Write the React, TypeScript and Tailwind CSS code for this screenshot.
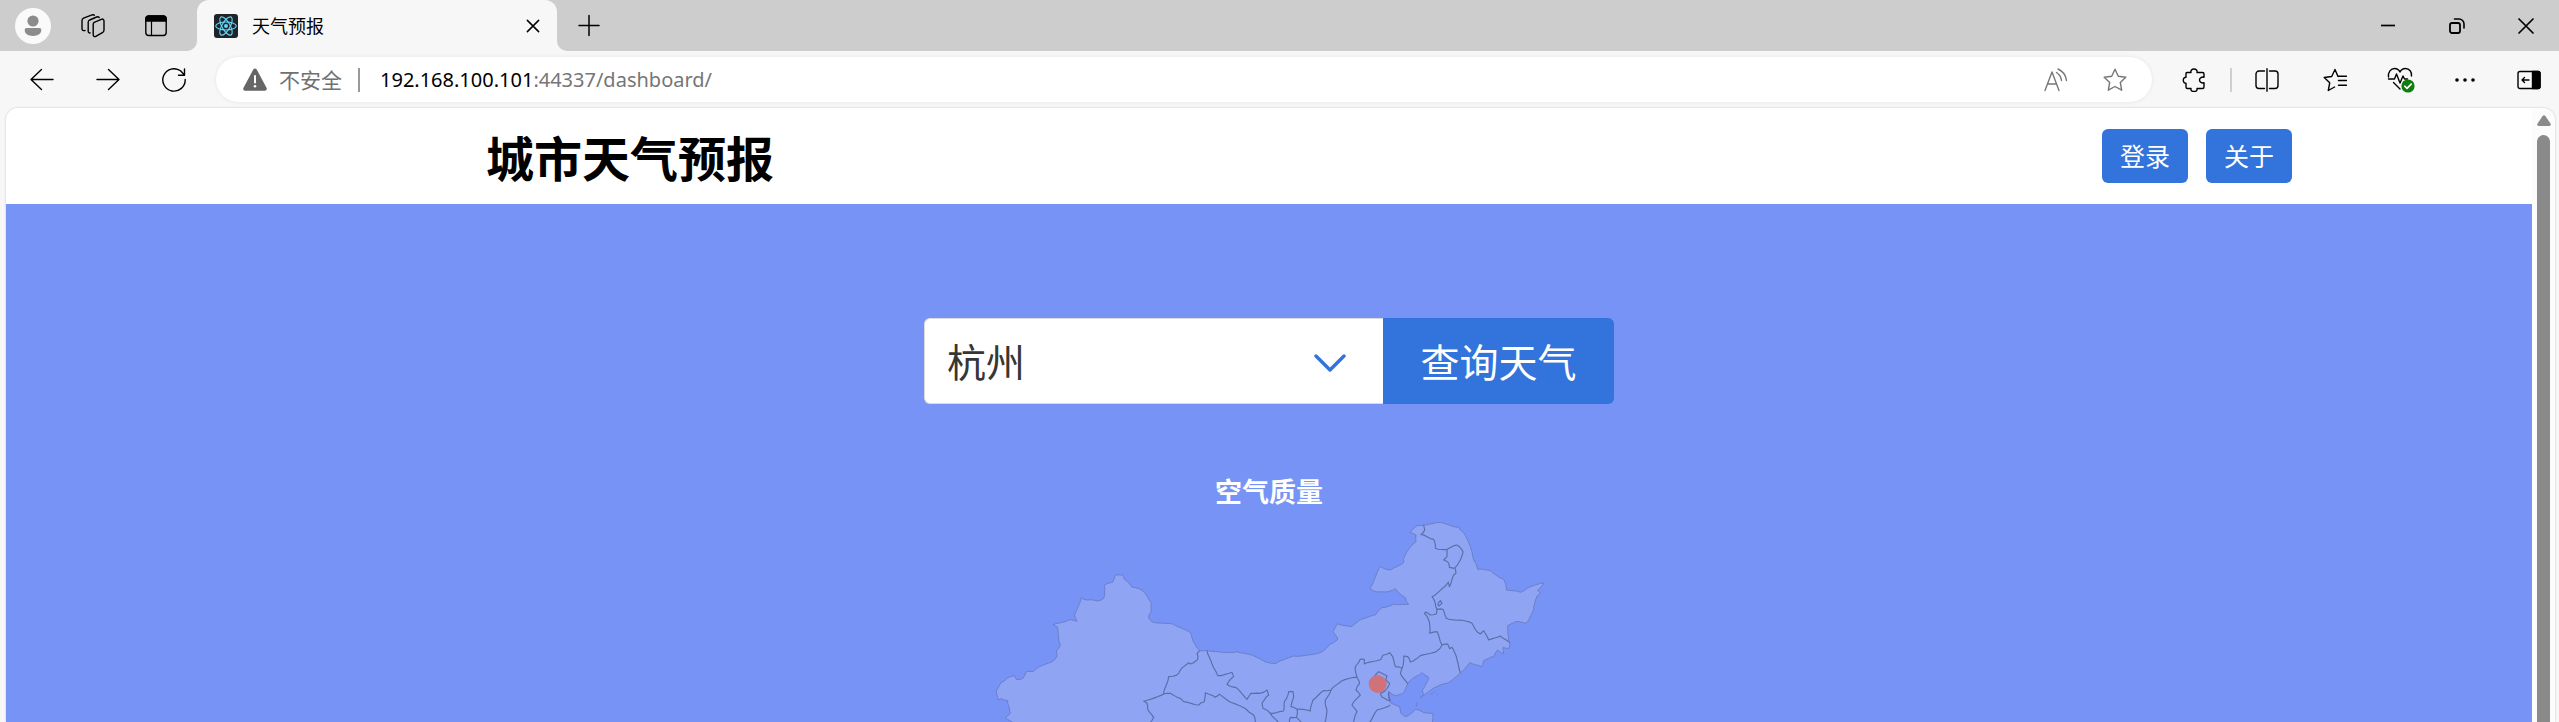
import type { ReactNode } from "react";

type Point = [number, number];

function Icon({ children, className = "size-6" }: { children: ReactNode; className?: string }) {
  return (
    <svg
      viewBox="0 0 24 24"
      fill="none"
      stroke="currentColor"
      strokeWidth="1.4"
      strokeLinecap="round"
      strokeLinejoin="round"
      className={className}
      aria-hidden="true"
    >
      {children}
    </svg>
  );
}

function IconButton({ label, className, children }: { label: string; className: string; children: ReactNode }) {
  return (
    <button type="button" aria-label={label} className={`flex h-11 shrink-0 items-center justify-center ${className}`}>
      {children}
    </button>
  );
}

function ReactLogo() {
  return (
    <svg viewBox="0 0 24 24" className="size-6 shrink-0" aria-hidden="true">
      <rect width="24" height="24" rx="3" fill="#20232a" />
      <g fill="none" stroke="#61dafb" strokeWidth="1.1">
        <ellipse cx="12" cy="12" rx="10.3" ry="4" />
        <ellipse cx="12" cy="12" rx="10.3" ry="4" transform="rotate(60 12 12)" />
        <ellipse cx="12" cy="12" rx="10.3" ry="4" transform="rotate(120 12 12)" />
      </g>
      <circle cx="12" cy="12" r="2" fill="#61dafb" />
    </svg>
  );
}

function TabStrip() {
  return (
    <div className="flex h-[51px] bg-[#f7f7f7]">
      <div className="flex w-[197px] shrink-0 items-center rounded-br-[10px] bg-[#cdcdcd] pl-[15px]">
        <button type="button" aria-label="个人资料" className="size-9 overflow-hidden rounded-full bg-[#fafafa]">
          <svg viewBox="0 0 36 36" fill="#8c8c8c" aria-hidden="true">
            <circle cx="18" cy="13" r="5.6" />
            <path d="M11.5 20h13a1.8 1.8 0 0 1 1.8 1.8c0 4-3.2 6.2-8.3 6.2s-8.3-2.2-8.3-6.2A1.8 1.8 0 0 1 11.5 20z" />
          </svg>
        </button>
        <IconButton label="工作区" className="ml-5 w-11">
          <Icon>
            <path d="M13.2 8.4 20.3 5.300c1.500-.6 2.700.1 2.700 1.600v9.200c0 1.200-.5 2-1.600 2.500l-6.600 3.700c-1.300.7-2.600 0-2.600-1.600V10.500c0-1 .3-1.700 1-2.100z" />
            <path d="M9.200 18.900c-1.300.2-2-.5-2-1.700V8.300c0-1.100.5-1.900 1.500-2.300l7-3c1-.4 1.900-.2 2.500.5" />
            <path d="M4 16.500c-1.700.3-3-.3-3-1.700V6.500c0-1.100.5-1.900 1.500-2.300l8.600-3.300c1-.4 1.700-.2 2.200.4" />
          </Icon>
        </IconButton>
        <IconButton label="标签页操作" className="ml-[19px] w-11">
          <Icon>
            <rect x="1.800" y="2" width="20.400" height="19.500" rx="3" />
            <path d="M2 7V5a3 3 0 0 1 3-3h14a3 3 0 0 1 3 3v2z" fill="currentColor" />
            <path d="M7.500 7v14.500" strokeWidth="1.200" />
          </Icon>
        </IconButton>
      </div>
      <div className="w-[360px] shrink-0 bg-[#cdcdcd]">
        <div className="flex h-full items-center rounded-t-[12px] bg-[#f7f7f7] pr-2 pl-[17px]">
          <ReactLogo />
          <span className="ml-[14px] pb-0.5 text-[18px] leading-6 text-black">天气预报</span>
          <IconButton label="关闭标签页" className="ml-auto w-8">
            <Icon className="size-[18px]">
              <path d="M4.500 4.500l15 15M19.500 4.500l-15 15" strokeWidth="2" />
            </Icon>
          </IconButton>
        </div>
      </div>
      <div className="flex grow items-center rounded-bl-[10px] bg-[#cdcdcd] pr-[11px] pl-[10px]">
        <IconButton label="新建标签页" className="w-11">
          <Icon>
            <path d="M2 11.500h20M12 1.500v20" strokeWidth="1.500" />
          </Icon>
        </IconButton>
        <div className="ml-auto flex items-center gap-[25px]">
          <IconButton label="最小化" className="w-11">
            <Icon>
              <path d="M5 11.500h14" strokeWidth="1.700" strokeLinecap="butt" />
            </Icon>
          </IconButton>
          <IconButton label="还原" className="w-11">
            <Icon>
              <rect x="5" y="9" width="10" height="10" rx="2" strokeWidth="1.800" />
              <path d="M9.500 5h4.500a5 5 0 0 1 5 5v4" strokeWidth="1.600" />
            </Icon>
          </IconButton>
          <IconButton label="关闭窗口" className="w-11">
            <Icon>
              <path d="M5 5l14 14M19 5L5 19" strokeWidth="1.700" />
            </Icon>
          </IconButton>
        </div>
      </div>
    </div>
  );
}

function Toolbar() {
  return (
    <div className="flex h-[57px] items-center bg-[#f7f7f7] pr-2 pl-5">
      <IconButton label="后退" className="w-11">
        <Icon>
          <path d="M23 11.500H1M11.500 1.500 1 11.500l10.500 10" />
        </Icon>
      </IconButton>
      <IconButton label="前进" className="ml-[22px] w-11">
        <Icon>
          <path d="M1 11.500h22M12.500 1.500 23 11.500l-10.500 10" />
        </Icon>
      </IconButton>
      <IconButton label="刷新" className="ml-[22px] w-11">
        <Icon>
          <path d="M23.200 11.500A11.200 11.200 0 1 1 18.500 2.800l4 4.200M22.500 1v6.200h-6" />
        </Icon>
      </IconButton>

      <div className="ml-5 flex h-[45px] grow items-center rounded-full bg-white pr-[15px] pl-[27px] shadow-[0_0_4px_rgba(0,0,0,0.08)]">
        <svg viewBox="0 0 24 24" className="size-6 shrink-0" aria-hidden="true">
          <path d="M10.300 1.500c.8-1.300 2.600-1.300 3.400 0l9.800 18.200c.8 1.400-.1 3.100-1.700 3.100H2.200c-1.600 0-2.500-1.700-1.700-3.100z" fill="#666666" />
          <path d="M12 8v6.500" stroke="#ffffff" strokeWidth="2" strokeLinecap="round" />
          <circle cx="12" cy="18.300" r="1.300" fill="#ffffff" />
        </svg>
        <span className="ml-3 pb-0.5 text-[21px] leading-7 text-[#707070]">不安全</span>
        <span className="ml-4 h-6 w-0.5 bg-[#999999]" />
        <div className="ml-5 grow font-['Noto_Sans','Noto_Sans_CJK_SC',sans-serif] text-[20px] leading-7">
          <span className="text-black">192.168.100.101</span>
          <span className="text-[#767676]">:44337/dashboard/</span>
        </div>
        <div className="flex items-center gap-[15px] text-[#767676]">
          <IconButton label="大声朗读此页内容" className="w-11">
            <Icon>
              <path d="M1 22.500 8 4l7 18.500M3.700 16h8.700" />
              <path d="M12.500 4.500a11 11 0 0 1 5 8M14 1a14.500 14.500 0 0 1 8.500 11.500" />
            </Icon>
          </IconButton>
          <IconButton label="收藏此页" className="w-11">
            <Icon>
              <path d="M12 1.200l3.300 7 7.500 1-5.500 5.300 1.400 7.700L12 18.500l-6.700 3.700 1.400-7.700L1.200 9.200l7.500-1z" />
            </Icon>
          </IconButton>
        </div>
      </div>

      <div className="ml-5 flex items-center text-black">
        <IconButton label="扩展" className="w-11">
          <Icon>
            <path d="M5 4.500h4c-.5-2 .8-3.500 3-3.500s3.500 1.500 3 3.500h5.500A1.500 1.500 0 0 1 22 6v3.200c-2.300-.5-4.500.5-4.500 2.800s2.200 3.300 4.500 2.800V19a1.500 1.500 0 0 1-1.500 1.500H15c.5 1.700-.8 3-3 3s-3.500-1.300-3-3H5.500A1.500 1.500 0 0 1 4 19v-3.700c-1.600.1-2.700-1.300-2.700-3.100S2.400 9 4 9.200V5.500a1 1 0 0 1 1-1z" />
          </Icon>
        </IconButton>
        <span className="mr-[13px] ml-[14px] h-6 w-0.5 bg-[#cfcfcf]" />
        <IconButton label="拆分屏幕" className="w-11">
          <Icon>
            <path d="M9.500 3H4a3 3 0 0 0-3 3v11.500a3 3 0 0 0 3 3h5.500M14.500 3H20a3 3 0 0 1 3 3v11.500a3 3 0 0 1-3 3h-5.500M12 .7v22.500" />
          </Icon>
        </IconButton>
        <IconButton label="收藏夹" className="ml-6 w-11">
          <Icon>
            <path d="M15 8.500 12 1.500l-3.300 7-7.500 1 5.500 5.300-1.400 7.700 6.300-3.500M15.500 8.200h8M15.500 12.500h8M15.500 17.300h8" />
          </Icon>
        </IconButton>
        <IconButton label="浏览器概要" className="ml-[22px] w-11">
          <svg viewBox="0 0 28 28" fill="none" stroke="currentColor" strokeWidth="1.400" strokeLinecap="round" strokeLinejoin="round" className="size-7" aria-hidden="true">
            <path d="M1.500 11C.8 6 4 2.500 7.500 2.500c2.500 0 4.500 1.500 5.500 3.500 1-2 3-3.500 5.500-3.500 4 0 6.500 3.500 6 7.500" />
            <path d="M1.500 13h6l2-5 3.500 9 3-7 1.500 3h3M6.500 16.500l6.500 6.500" />
            <circle cx="21" cy="20" r="6.600" fill="#107c10" stroke="none" />
            <path d="m17.800 20.200 2.200 2.200 4.200-4.300" stroke="#ffffff" strokeWidth="1.600" />
          </svg>
        </IconButton>
        <IconButton label="设置及其他" className="ml-5 w-11">
          <Icon>
            <g fill="currentColor" stroke="none">
              <circle cx="4" cy="12" r="1.800" />
              <circle cx="12" cy="12" r="1.800" />
              <circle cx="20" cy="12" r="1.800" />
            </g>
          </Icon>
        </IconButton>
        <IconButton label="侧边栏" className="ml-5 w-11">
          <Icon>
            <rect x="1" y="3.500" width="22" height="17" rx="2" />
            <path d="M15.500 3.500H21a2 2 0 0 1 2 2v13a2 2 0 0 1-2 2h-5.500z" fill="currentColor" />
            <path d="M12 12H5M7.500 9.500 5 12l2.500 2.500" />
          </Icon>
        </IconButton>
      </div>
    </div>
  );
}

const outline: Point[] = [
  [105, 640], [75, 622], [90, 610], [86, 590], [82, 572], [62, 566], [55, 570], [48, 542], [62, 518], [80, 505], [102, 497],
  [108, 508], [128, 505], [138, 485], [158, 485], [170, 475], [222, 450], [230, 440], [228, 422], [240, 405], [232, 352],
  [218, 344], [265, 330], [290, 334], [282, 318], [302, 263], [320, 270], [350, 273], [370, 265], [372, 225], [398, 216],
  [405, 195], [428, 195], [432, 208], [455, 232], [485, 240], [497, 252], [513, 278], [512, 305], [505, 325], [515, 335],
  [580, 343], [632, 370], [642, 400], [658, 422], [680, 421], [730, 428], [770, 425], [805, 433], [850, 453], [886, 461],
  [940, 438], [1005, 432], [1030, 422], [1050, 402], [1073, 387], [1058, 365], [1072, 341], [1115, 349], [1145, 327],
  [1185, 315], [1205, 293], [1240, 282], [1285, 283], [1275, 263], [1245, 236], [1220, 246], [1180, 243], [1168, 235],
  [1200, 170], [1230, 180], [1270, 158], [1270, 145], [1285, 118], [1307, 95], [1307, 75], [1288, 68], [1310, 47],
  [1330, 45], [1380, 38], [1420, 50], [1435, 52], [1450, 68], [1472, 118], [1480, 150], [1492, 178], [1530, 182],
  [1570, 208], [1578, 240], [1620, 247], [1640, 235], [1690, 219], [1672, 240], [1680, 250], [1670, 258], [1660, 300],
  [1637, 340], [1605, 335], [1582, 347], [1588, 398], [1586, 415], [1568, 412], [1570, 432], [1552, 420], [1540, 440],
  [1510, 452], [1505, 470], [1468, 458], [1440, 488], [1400, 520], [1370, 530], [1320, 563], [1330, 550], [1325, 543],
  [1345, 502], [1325, 488], [1305, 500], [1282, 521], [1270, 548], [1245, 557], [1225, 545], [1228, 575], [1258, 590],
  [1262, 610], [1277, 620], [1305, 598], [1330, 608], [1357, 610], [1355, 640],
];

const borders: Point[][] = [
  [[658, 422], [650, 430], [652, 448], [630, 462], [625, 458], [600, 480], [588, 496], [565, 500], [560, 520], [550, 552], [490, 573], [500, 580], [502, 598], [520, 622], [508, 640]],
  [[550, 552], [570, 550], [600, 565], [610, 575], [655, 585], [672, 575], [675, 548], [705, 562], [718, 553], [755, 578], [800, 600], [820, 615], [825, 640]],
  [[680, 421], [695, 462], [712, 497], [755, 487], [760, 500], [740, 523], [765, 532], [800, 568], [812, 550], [840, 550], [860, 540], [865, 555], [845, 580], [848, 595], [870, 610], [910, 603], [912, 575], [925, 545], [938, 545], [940, 560], [932, 590], [950, 598], [990, 603], [998, 570], [1030, 542], [1052, 540], [1085, 512], [1130, 502]],
  [[870, 610], [897, 640]],
  [[950, 598], [948, 622], [930, 622], [928, 640]],
  [[948, 622], [964, 640]],
  [[1052, 540], [1035, 570], [1040, 600], [1032, 640]],
  [[1130, 502], [1138, 520], [1127, 540], [1140, 555], [1115, 585], [1130, 605], [1120, 640]],
  [[1130, 502], [1125, 470], [1140, 447], [1152, 448], [1152, 462], [1202, 448], [1208, 435], [1228, 428], [1237, 440], [1245, 470], [1265, 475], [1260, 490], [1282, 521]],
  [[1265, 475], [1270, 438], [1282, 440], [1290, 456], [1320, 437], [1370, 423], [1385, 405], [1380, 395], [1370, 365], [1348, 370], [1345, 330], [1332, 310], [1337, 306], [1350, 315], [1368, 312], [1370, 298], [1388, 298], [1398, 325], [1440, 330], [1475, 340], [1490, 365], [1500, 372], [1510, 362], [1525, 390], [1560, 378], [1588, 398]],
  [[1385, 405], [1402, 402], [1408, 416], [1415, 412], [1430, 450], [1440, 488]],
  [[1370, 298], [1365, 280], [1355, 260], [1390, 232], [1404, 216], [1407, 230], [1420, 195], [1427, 190], [1425, 175]],
  [[1330, 45], [1333, 60], [1322, 73], [1340, 80], [1360, 88], [1365, 115], [1400, 118], [1430, 105], [1448, 125], [1440, 150], [1422, 175], [1407, 172], [1402, 155], [1390, 150], [1400, 140], [1400, 118]],
  [[1372, 282], [1380, 272], [1385, 280], [1375, 288], [1372, 282]],
  [[1168, 512], [1185, 495], [1195, 485], [1220, 497], [1216, 510], [1228, 520], [1220, 535], [1200, 550], [1205, 562], [1220, 570], [1230, 572], [1225, 545]],
  [[1165, 640], [1190, 600], [1230, 585]],
];

// Breaks straight segments into short uneven steps so borders read as natural lines.
function roughPath(points: Point[]) {
  const steps: string[] = [];
  points.forEach(([x, y], i) => {
    steps.push(`${x} ${y}`);
    const next = points[i + 1];
    if (!next) return;
    const dx = next[0] - x;
    const dy = next[1] - y;
    const length = Math.hypot(dx, dy);
    const count = Math.floor(length / 8);
    for (let k = 1; k < count; k++) {
      const t = k / count;
      const shift = Math.sin(k * 12.9 + x * 7.1 + y * 3.7) * 2;
      steps.push(`${(x + dx * t - (dy / length) * shift).toFixed(1)} ${(y + dy * t + (dx / length) * shift).toFixed(1)}`);
    }
  });
  return `M${steps.join("L")}`;
}

function AirQualityMap() {
  return (
    <svg viewBox="-4 0 1740 636" className="h-[212px] w-[580px]" role="img" aria-label="空气质量">
      <path d={roughPath(outline)} fill="#8fa5f4" stroke="#6c80c8" strokeWidth="3" strokeLinejoin="round" />
      <g fill="none" stroke="#5c6ca6" strokeWidth="3.4" strokeLinejoin="round">
        {borders.map((line, i) => (
          <path key={i} d={roughPath(line)} />
        ))}
      </g>
      <path d="M1350 552l8-3M1362 545l4 2M1370 553l3 1M1311 576l-4 14" stroke="#6c80c8" strokeWidth="3" />
      <circle cx="1192" cy="522" r="27" fill="#d0727a" />
    </svg>
  );
}

function SiteHeader() {
  return (
    <header className="flex h-24 items-center justify-between bg-white pr-[9.5%] pl-[19%]">
      <h1 className="text-5xl font-bold text-black">城市天气预报</h1>
      <nav className="flex gap-[18px]">
        <a href="#login" className="flex h-[54px] w-[86px] items-center justify-center rounded-md bg-[#3273dc] text-[25px] text-white">登录</a>
        <a href="#about" className="flex h-[54px] w-[86px] items-center justify-center rounded-md bg-[#3273dc] text-[25px] text-white">关于</a>
      </nav>
    </header>
  );
}

function WeatherSearch() {
  return (
    <form className="flex h-[86px]" onSubmit={(event) => event.preventDefault()}>
      <div className="relative w-[459px]">
        <select
          aria-label="城市"
          defaultValue="杭州"
          className="size-full appearance-none rounded-l-md border border-r-0 border-[#dbdbdb] bg-white pb-0.5 pl-[22px] text-[39px] text-[#363636]"
        >
          <option>杭州</option>
          <option>北京</option>
        </select>
        <svg viewBox="0 0 32 18" className="pointer-events-none absolute top-9 right-[37px] h-[18px] w-8" fill="none" stroke="#3273dc" strokeWidth="3.400" strokeLinecap="round" strokeLinejoin="round" aria-hidden="true">
          <path d="M2 2l14 14L30 2" />
        </svg>
      </div>
      <button type="submit" className="w-[231px] rounded-r-md bg-[#3273dc] pb-0.5 text-[39px] text-white">查询天气</button>
    </form>
  );
}

function Scrollbar() {
  return (
    <div className="flex w-[23px] shrink-0 flex-col items-center bg-[#fcfcfc] pt-[7px]" aria-hidden="true">
      <svg viewBox="0 0 14 11" className="h-[11px] w-[14px] shrink-0" fill="#8a8a8a">
        <path d="M5.500 1.200Q7-.8 8.500 1.200l5 7.300Q14.500 11 12 11H2Q-.5 11 .5 8.500z" />
      </svg>
      <div className="mt-[9px] w-[13px] grow rounded-t-full bg-[#8a8a8a]" />
    </div>
  );
}

export default function App() {
  return (
    <div className="flex min-h-screen flex-col bg-[#f7f7f7] font-['Noto_Sans_CJK_SC',sans-serif]">
      <TabStrip />
      <Toolbar />
      <div className="mr-1 ml-1.5 flex grow overflow-hidden rounded-t-[12px] shadow-[0_0_2px_rgba(0,0,0,0.25)]">
        <div className="flex grow flex-col">
          <SiteHeader />
          <main className="flex grow flex-col items-center bg-[#7793f6] pt-[114px]">
            <WeatherSearch />
            <h2 className="mt-[67px] text-[27px] leading-[39px] font-bold text-white">空气质量</h2>
            <AirQualityMap />
          </main>
        </div>
        <Scrollbar />
      </div>
    </div>
  );
}
